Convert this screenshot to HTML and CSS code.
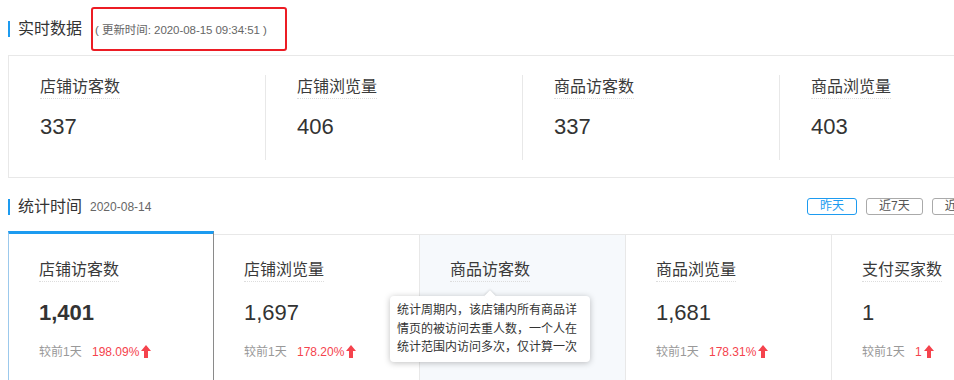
FILE: index.html
```html
<!DOCTYPE html>
<html lang="zh-CN">
<head>
  <meta charset="UTF-8">
  <title>数据概况</title>
  <link rel="stylesheet" href="styles.css">
</head>
<body>
  <div class="page">

    <!-- 实时数据 -->
    <div class="section-head head-live">
      <h3 class="section-title">实时数据</h3>
      <span class="stamp">( 更新时间: 2020-08-15 09:34:51 )</span>
    </div>

    <div class="live-panel">
      <div class="live-item">
        <span class="item-label">店铺访客数</span>
        <div class="live-value">337</div>
      </div>
      <div class="live-item">
        <span class="item-label">店铺浏览量</span>
        <div class="live-value">406</div>
      </div>
      <div class="live-item">
        <span class="item-label">商品访客数</span>
        <div class="live-value">337</div>
      </div>
      <div class="live-item">
        <span class="item-label">商品浏览量</span>
        <div class="live-value">403</div>
      </div>
    </div>

    <!-- 统计时间 -->
    <div class="section-head head-stat">
      <h3 class="section-title">统计时间</h3>
      <span class="stat-date">2020-08-14</span>
      <div class="range">
        <button class="range-btn active">昨天</button>
        <button class="range-btn">近7天</button>
        <button class="range-btn">近30天</button>
      </div>
    </div>

    <div class="cards">
      <div class="card active">
        <span class="item-label">店铺访客数</span>
        <div class="card-value">1,401</div>
        <div class="compare">较前1天 <span class="rise">198.09%<svg class="arrow" width="10" height="13" viewBox="0 0 10 13"><path d="M5 0 L10 6 H7 V13 H3 V6 H0 Z"/></svg></span></div>
      </div>
      <div class="card">
        <span class="item-label">店铺浏览量</span>
        <div class="card-value">1,697</div>
        <div class="compare">较前1天 <span class="rise">178.20%<svg class="arrow" width="10" height="13" viewBox="0 0 10 13"><path d="M5 0 L10 6 H7 V13 H3 V6 H0 Z"/></svg></span></div>
      </div>
      <div class="card hover">
        <span class="item-label">商品访客数</span>
        <div class="tooltip">统计周期内，该店铺内所有商品详情页的被访问去重人数，一个人在统计范围内访问多次，仅计算一次</div>
      </div>
      <div class="card">
        <span class="item-label">商品浏览量</span>
        <div class="card-value">1,681</div>
        <div class="compare">较前1天 <span class="rise">178.31%<svg class="arrow" width="10" height="13" viewBox="0 0 10 13"><path d="M5 0 L10 6 H7 V13 H3 V6 H0 Z"/></svg></span></div>
      </div>
      <div class="card">
        <span class="item-label">支付买家数</span>
        <div class="card-value">1</div>
        <div class="compare">较前1天 <span class="rise">1<svg class="arrow" width="10" height="13" viewBox="0 0 10 13"><path d="M5 0 L10 6 H7 V13 H3 V6 H0 Z"/></svg></span></div>
      </div>
    </div>

  </div>
</body>
</html>
```

FILE: styles.css
```css
* {
  box-sizing: border-box;
  margin: 0;
  padding: 0;
}

body {
  font-family: "Liberation Sans", "Noto Sans CJK SC", sans-serif;
  background-color: #fff;
  color: #333;
  overflow: hidden;
}

.page {
  width: 995px;
  padding: 7px 0 0 8px;
}

/* Section headers */
.section-head {
  display: flex;
  align-items: center;
}

.head-live {
  height: 44px;
}

.section-title {
  font-size: 16px;
  font-weight: normal;
  line-height: 16px;
  color: #333;
  border-left: 2px solid #1d9bf0;
  padding-left: 8px;
}

.stamp {
  height: 44px;
  display: flex;
  align-items: center;
  margin-left: 9px;
  padding: 0 18px 0 2px;
  border: 2px solid #ec1c24;
  border-radius: 3px;
  font-size: 11.5px;
  letter-spacing: -0.05px;
  color: #666;
}

/* Live panel */
.live-panel {
  display: flex;
  margin-top: 4px;
  border: 1px solid #e8e8e8;
  border-right: none;
  width: 1040px;
}

.live-item {
  flex: none;
  width: 257px;
  height: 85px;
  margin: 19px 0 17px;
  padding: 1px 0 0 31px;
  border-right: 1px solid #e8e8e8;
}

.item-label {
  display: inline-block;
  font-size: 16px;
  line-height: 22px;
  color: #3a3a3a;
  border-bottom: 1px dotted #ddd;
}

.live-value {
  margin-top: 13px;
  font-size: 22px;
  line-height: 30px;
  color: #333;
}

/* Stat header */
.head-stat {
  margin: 20px 0 16px;
  height: 17px;
}

.stat-date {
  margin-left: 8px;
  font-size: 12px;
  color: #666;
}

.range {
  display: flex;
  gap: 9px;
  margin-left: auto;
}

.range-btn {
  font-family: inherit;
  font-size: 12px;
  line-height: 15px;
  padding: 0 12px;
  background: #fff;
  color: #555;
  border: 1px solid #aaa;
  border-radius: 3px;
}

.range-btn.active {
  color: #1d9bf0;
  border-color: #1d9bf0;
}

/* Cards */
.cards {
  display: flex;
  align-items: flex-start;
  width: 1040px;
}

.card {
  position: relative;
  flex: none;
  width: 206px;
  height: 150px;
  margin-top: 3px;
  padding: 24px 0 0 30px;
  border-top: 1px solid #e8e8e8;
  border-right: 1px solid #e8e8e8;
}

.card.active {
  margin-top: 0;
  padding-top: 25px;
  border-top: 3px solid #1d9bf0;
  border-left: 1px solid #9cc9ec;
  border-right: 1px solid #8a8a8a;
}

.card.hover {
  background-color: #f6f9fc;
}

.card-value {
  margin-top: 16px;
  font-size: 22px;
  line-height: 30px;
  color: #333;
}

.card.active .card-value {
  font-weight: bold;
}

.compare {
  margin-top: 16px;
  font-size: 12px;
  line-height: 16px;
  color: #999;
}

.rise {
  margin-left: 7px;
  color: #f5434d;
}

.arrow {
  margin-left: 2px;
  vertical-align: -2px;
  fill: #f5434d;
}

/* Tooltip over the hovered card */
.tooltip {
  position: absolute;
  top: 61px;
  left: -30px;
  width: 200px;
  padding: 5px 6px 5px 7px;
  background-color: #fff;
  border-radius: 4px;
  box-shadow: 0 1px 6px rgba(0, 0, 0, 0.25);
  font-size: 12px;
  line-height: 18.5px;
  color: #333;
  z-index: 10;
}

.tooltip::before {
  content: "";
  position: absolute;
  top: -4px;
  left: 96px;
  width: 8px;
  height: 8px;
  background-color: #fff;
  transform: rotate(45deg);
  box-shadow: -1px -1px 2px rgba(0, 0, 0, 0.1);
}
```
